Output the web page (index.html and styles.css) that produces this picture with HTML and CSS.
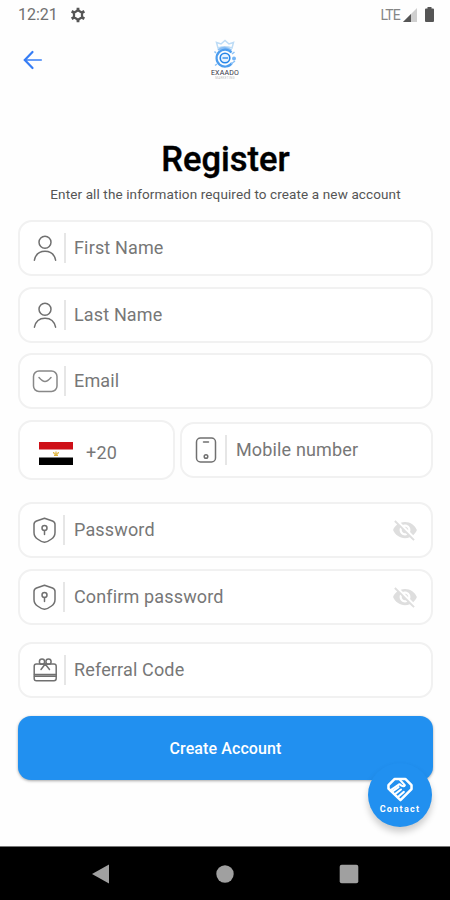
FILE: index.html
```html
<!DOCTYPE html>
<html lang="en">
<head>
<meta charset="utf-8">
<title>Register</title>
<link rel="stylesheet" href="styles.css">
</head>
<body>
<svg class="defs" aria-hidden="true">
  <symbol id="person" viewBox="0 0 26 28"><circle cx="13" cy="8.2" r="6"/><path d="M2.4 26.2C3.6 20.4 7.600 17.200 13 17.200S22.400 20.400 23.600 26.200"/></symbol>
  <symbol id="shield" viewBox="0 0 26 28"><path d="M12.500 2.200L20.500 5Q23 6 23 8.500V16.500Q23 20.500 19.500 23Q16 25.800 12.500 26.200Q9 25.800 5.500 23Q2 20.500 2 16.500V8.500Q2 6 4.500 5Z"/><circle cx="12.500" cy="12" r="2.500"/><path d="M12.500 14.500V18.500"/></symbol>
  <symbol id="eye-off" viewBox="0 0 24 24"><path d="M12 7c2.760 0 5 2.240 5 5 0 .65-.13 1.260-.36 1.830l2.920 2.920c1.510-1.260 2.700-2.890 3.430-4.750-1.730-4.390-6-7.500-11-7.500-1.400 0-2.740.25-3.980.7l2.160 2.160C10.740 7.130 11.350 7 12 7zM2 4.270l2.280 2.280.46.46C3.080 8.300 1.780 10.020 1 12c1.730 4.390 6 7.500 11 7.500 1.550 0 3.030-.3 4.380-.84l.42.42L19.730 22 21 20.730 3.270 3 2 4.270zM7.530 9.800l1.550 1.550c-.05.21-.08.43-.08.65 0 1.660 1.340 3 3 3 .22 0 .44-.03.65-.08l1.550 1.550c-.67.33-1.410.53-2.200.53-2.760 0-5-2.240-5-5 0-.79.2-1.530.53-2.200zm4.310-.78l3.150 3.150.02-.16c0-1.660-1.340-3-3-3l-.17.01z"/></symbol>
</svg>

<header class="status">
  <span class="time">12:21</span>
  <svg class="gear" viewBox="0 0 24 24"><path fill="none" stroke="#555" stroke-width="3.400" stroke-linejoin="round" d="M12 5L18 8.500V15.500L12 19L6 15.500V8.500Z"/><path stroke="#555" stroke-width="4.200" d="M12 1V5.500M12 18.500V23M2.500 6.500L6.400 8.700M17.600 15.300L21.500 17.500M2.500 17.500L6.400 15.300M17.600 8.700L21.500 6.500"/></svg>
  <span class="lte">LTE</span>
  <svg class="signal" viewBox="0 0 14 14"><path fill="#cfcfcf" d="M14 0V14H0Z"/><path fill="#555" d="M8 6V14H0Z"/></svg>
  <svg class="battery" viewBox="0 0 9 15"><path fill="#555" d="M2.500 0H6.500V1.500H8Q9 1.500 9 2.500V14Q9 15 8 15H1Q0 15 0 14V2.500Q0 1.500 1 1.500H2.500Z"/></svg>
</header>

<div class="topbar">
  <svg class="back" viewBox="0 0 20 20"><path class="shaft" d="M18 10H3"/><path d="M9.500 2L1.800 10L9.500 18"/></svg>
  <div class="logo">
    <svg viewBox="0 0 30 30">
      <g fill="none" stroke="#bddcf6" stroke-width="1.500"><path d="M8 9L6.500 3.500L11 5L15 1.500L19 5L23.500 3.500L22 9Q15 6.500 8 9Z"/></g>
      <path fill="none" stroke="#8abff5" stroke-width="2" d="M8 11Q15 6.500 21.500 11.500"/>
      <path fill="none" stroke="#4d9dee" stroke-width="2.200" d="M21.500 13.500A8.500 8.500 0 1 0 22 24"/>
      <circle cx="15" cy="19" r="4.800" fill="#e7f3ff" stroke="#2585e8" stroke-width="1.600"/>
      <path stroke="#2585e8" stroke-width="1.300" d="M12.500 19H18"/>
      <circle cx="24" cy="19.500" r="2" fill="#75b5f5"/><path fill="none" stroke="#8ac1f7" stroke-width="1.500" d="M21 25L25 22M6 14L4.500 12.500M7 25L5 26.500M22 15L24.500 13"/>
    </svg>
    <span class="brand">EXAADO</span>
    <span class="tagline">MARKETING</span>
  </div>
</div>

<main>
  <h1>Register</h1>
  <p class="intro">Enter all the information required to create a new account</p>
  <form class="form">
    <div class="field"><svg class="icon"><use href="#person"/></svg><i class="bar"></i><span>First Name</span></div>
    <div class="field"><svg class="icon"><use href="#person"/></svg><i class="bar"></i><span>Last Name</span></div>
    <div class="field"><svg class="icon mail" viewBox="0 0 26 28"><rect x="1.500" y="4" width="23.500" height="20.500" rx="5.500"/><path d="M7 10.500Q10.500 14.500 13 14.500T19 10.500"/></svg><i class="bar"></i><span>Email</span></div>
    <div class="phone-row">
      <div class="field code">
        <svg class="flag" viewBox="0 0 34 23"><path fill="#fff" d="M0 0H34V23H0Z"/><path fill="#ce1018" d="M0 0H34V7.500H0Z"/><path fill="#000" d="M0 15.500H34V23H0Z"/><path fill="none" stroke="#dfb338" stroke-width="1.200" d="M14.500 10Q15 12.500 17 12.500T19.500 10M17 9.500V13M15 13.500H19"/></svg>
        <span>+20</span>
      </div>
      <div class="field mobile"><svg class="icon" viewBox="0 0 26 28"><rect x="3.500" y="2" width="19" height="24" rx="4"/><path d="M10.500 6H15.500"/><circle cx="13" cy="20.500" r="1.800"/></svg><i class="bar"></i><span>Mobile number</span></div>
    </div>
    <div class="field secret"><svg class="icon"><use href="#shield"/></svg><i class="bar"></i><span>Password</span><svg class="eye"><use href="#eye-off"/></svg></div>
    <div class="field secret"><svg class="icon"><use href="#shield"/></svg><i class="bar"></i><span>Confirm password</span><svg class="eye"><use href="#eye-off"/></svg></div>
    <div class="field referral"><svg class="icon" viewBox="0 0 26 28"><rect x="2.200" y="8" width="22" height="16.800" rx="2.200"/><path d="M2.500 18.500H24M2.500 20.200H24"/><circle cx="10" cy="5.700" r="2.600"/><circle cx="16.500" cy="5.700" r="2.600"/><path d="M13.200 8L9 13.500M13.200 8L17.500 13.500"/></svg><i class="bar"></i><span>Referral Code</span></div>
    <button class="submit" type="button">Create Account</button>
  </form>
</main>

<div class="contact">
  <svg viewBox="0 0 28 26"><path fill="#2190f0" stroke="#fff" stroke-width="2.600" stroke-linejoin="round" d="M8.500 2H19.500L26 8.500V12.500L14.500 24L2 12V8.500Z"/><g fill="none" stroke="#fff" stroke-width="2.200" stroke-linecap="round" stroke-linejoin="round"><path d="M14 3L19 8.500Q18 10.500 15.500 9L13.500 7.500L4 14"/><path d="M5.500 15.500L12.500 10.500M8.500 18L15 13M11.500 21L18 15.500"/></g></svg>
  <span>Contact</span>
</div>

<nav class="navbar">
  <svg viewBox="0 0 20 20"><path d="M1 10L18 .5V19.500Z"/></svg>
  <svg viewBox="0 0 20 20"><circle cx="10" cy="10" r="8.700"/></svg>
  <svg viewBox="0 0 20 20"><rect x=".7" y=".7" width="18.600" height="18.600" rx="2"/></svg>
</nav>
</body>
</html>
```
FILE: styles.css
```css
* { box-sizing: border-box; }
body {
  margin: 0;
  width: 450px;
  height: 900px;
  position: relative;
  display: flex;
  flex-direction: column;
  overflow: hidden;
  background: #fefefe;
  font-family: Roboto, sans-serif;
}
.defs { position: absolute; width: 0; height: 0; }
svg { flex: none; display: block; }

.status {
  height: 29px;
  padding: 0 16px 0 18px;
  display: flex;
  align-items: center;
  color: #707070;
  font-size: 16px;
}
.time { width: 52px; }
.gear { width: 16px; height: 16px; }
.lte { margin-left: auto; font-size: 14px; letter-spacing: -.8px; color: #858585; }
.signal { width: 14px; height: 14px; margin-left: 3px; }
.battery { width: 9px; height: 15px; margin-left: 8px; }

.topbar { height: 61px; display: grid; grid-template-columns: 1fr 60px 1fr; padding: 1px 23px 0; }
.back { width: 20px; height: 20px; margin-top: 20px; fill: none; stroke: #367df5; stroke-width: 2.2; stroke-linecap: round; }
.shaft { stroke: #6a9ff8; }
.logo { display: flex; flex-direction: column; align-items: center; padding-top: 9px; }
.logo svg { width: 30px; height: 30px; }
.brand { font-size: 7px; line-height: 8px; font-weight: 400; letter-spacing: .2px; color: #334; }
.tagline { font-size: 3px; line-height: 3px; color: #bbb; letter-spacing: .3px; }

main { padding: 50px 17px 0 18px; }
h1 { margin: 0; height: 38px; line-height: 38px; font-size: 34.500px; font-weight: 500; text-align: center; color: #000; -webkit-text-stroke: .4px #000; }
.intro { margin: 7px 0 0; height: 18px; line-height: 18px; font-size: 13.5px; letter-spacing: .12px; text-align: center; color: #555; white-space: nowrap; }
.form { padding-top: 17px; display: flex; flex-direction: column; gap: 10.500px; }
.field {
  height: 56px;
  display: flex;
  align-items: center;
  border: 2px solid #f1f1f1;
  border-radius: 14px;
  padding-left: 12px;
  background: #fff;
  color: #777;
  font-size: 18px;
  letter-spacing: .15px;
  white-space: nowrap;
}
.field span { line-height: 24px; }
.icon { width: 26px; height: 28px; fill: none; stroke: #707070; stroke-width: 1.500; stroke-linecap: round; stroke-linejoin: round; }
.mail { stroke: #888; }
.bar { width: 2px; height: 30px; margin: 0 8px 0 6px; background: #e6e6e6; }
.phone-row { display: flex; align-items: center; gap: 5px; }
.code { width: 157px; height: 60px; padding-left: 19px; }
.flag { width: 34px; height: 23px; margin-top: 7px; }
.code span { margin: 7px 0 0 13px; letter-spacing: .2px; }
.mobile { flex: 1; padding-left: 11px; }
.mobile .bar { margin-right: 9px; }
.secret .bar { margin-left: 5px; margin-right: 9px; }
.phone-row + .secret { margin-top: 12px; }
.eye { width: 26px; height: 26px; margin-left: auto; margin-right: 13px; fill: #dedede; }
.referral { margin-top: 7px; }
.submit {
  height: 64px;
  margin-top: 7px;
  padding: 2px 0 0;
  border: 0;
  border-radius: 13px;
  background: #2190f0;
  box-shadow: 0 1px 3px rgba(0, 0, 0, .35);
  color: #fff;
  font: 500 16px Roboto, sans-serif;
  letter-spacing: .1px;
}
.contact {
  position: absolute;
  left: 368px;
  top: 763px;
  width: 64px;
  height: 64px;
  border-radius: 50%;
  background: #2190f0;
  box-shadow: 0 5px 7px rgba(0, 0, 0, .2);
  display: flex;
  flex-direction: column;
  align-items: center;
  padding-top: 14px;
  color: #fff;
}
.contact svg { width: 28px; height: 25px; }
.contact span { margin-top: 1px; font: 700 9px/12px Roboto, sans-serif; letter-spacing: 1.300px; }
.navbar {
  height: 54px;
  margin-top: auto;
  border-top: 1px solid #777;
  background: #000;
  display: flex;
  justify-content: space-between;
  align-items: center;
  padding: 0 91px;
}
.navbar svg { width: 20px; height: 20px; fill: #a0a0a0; }
```
